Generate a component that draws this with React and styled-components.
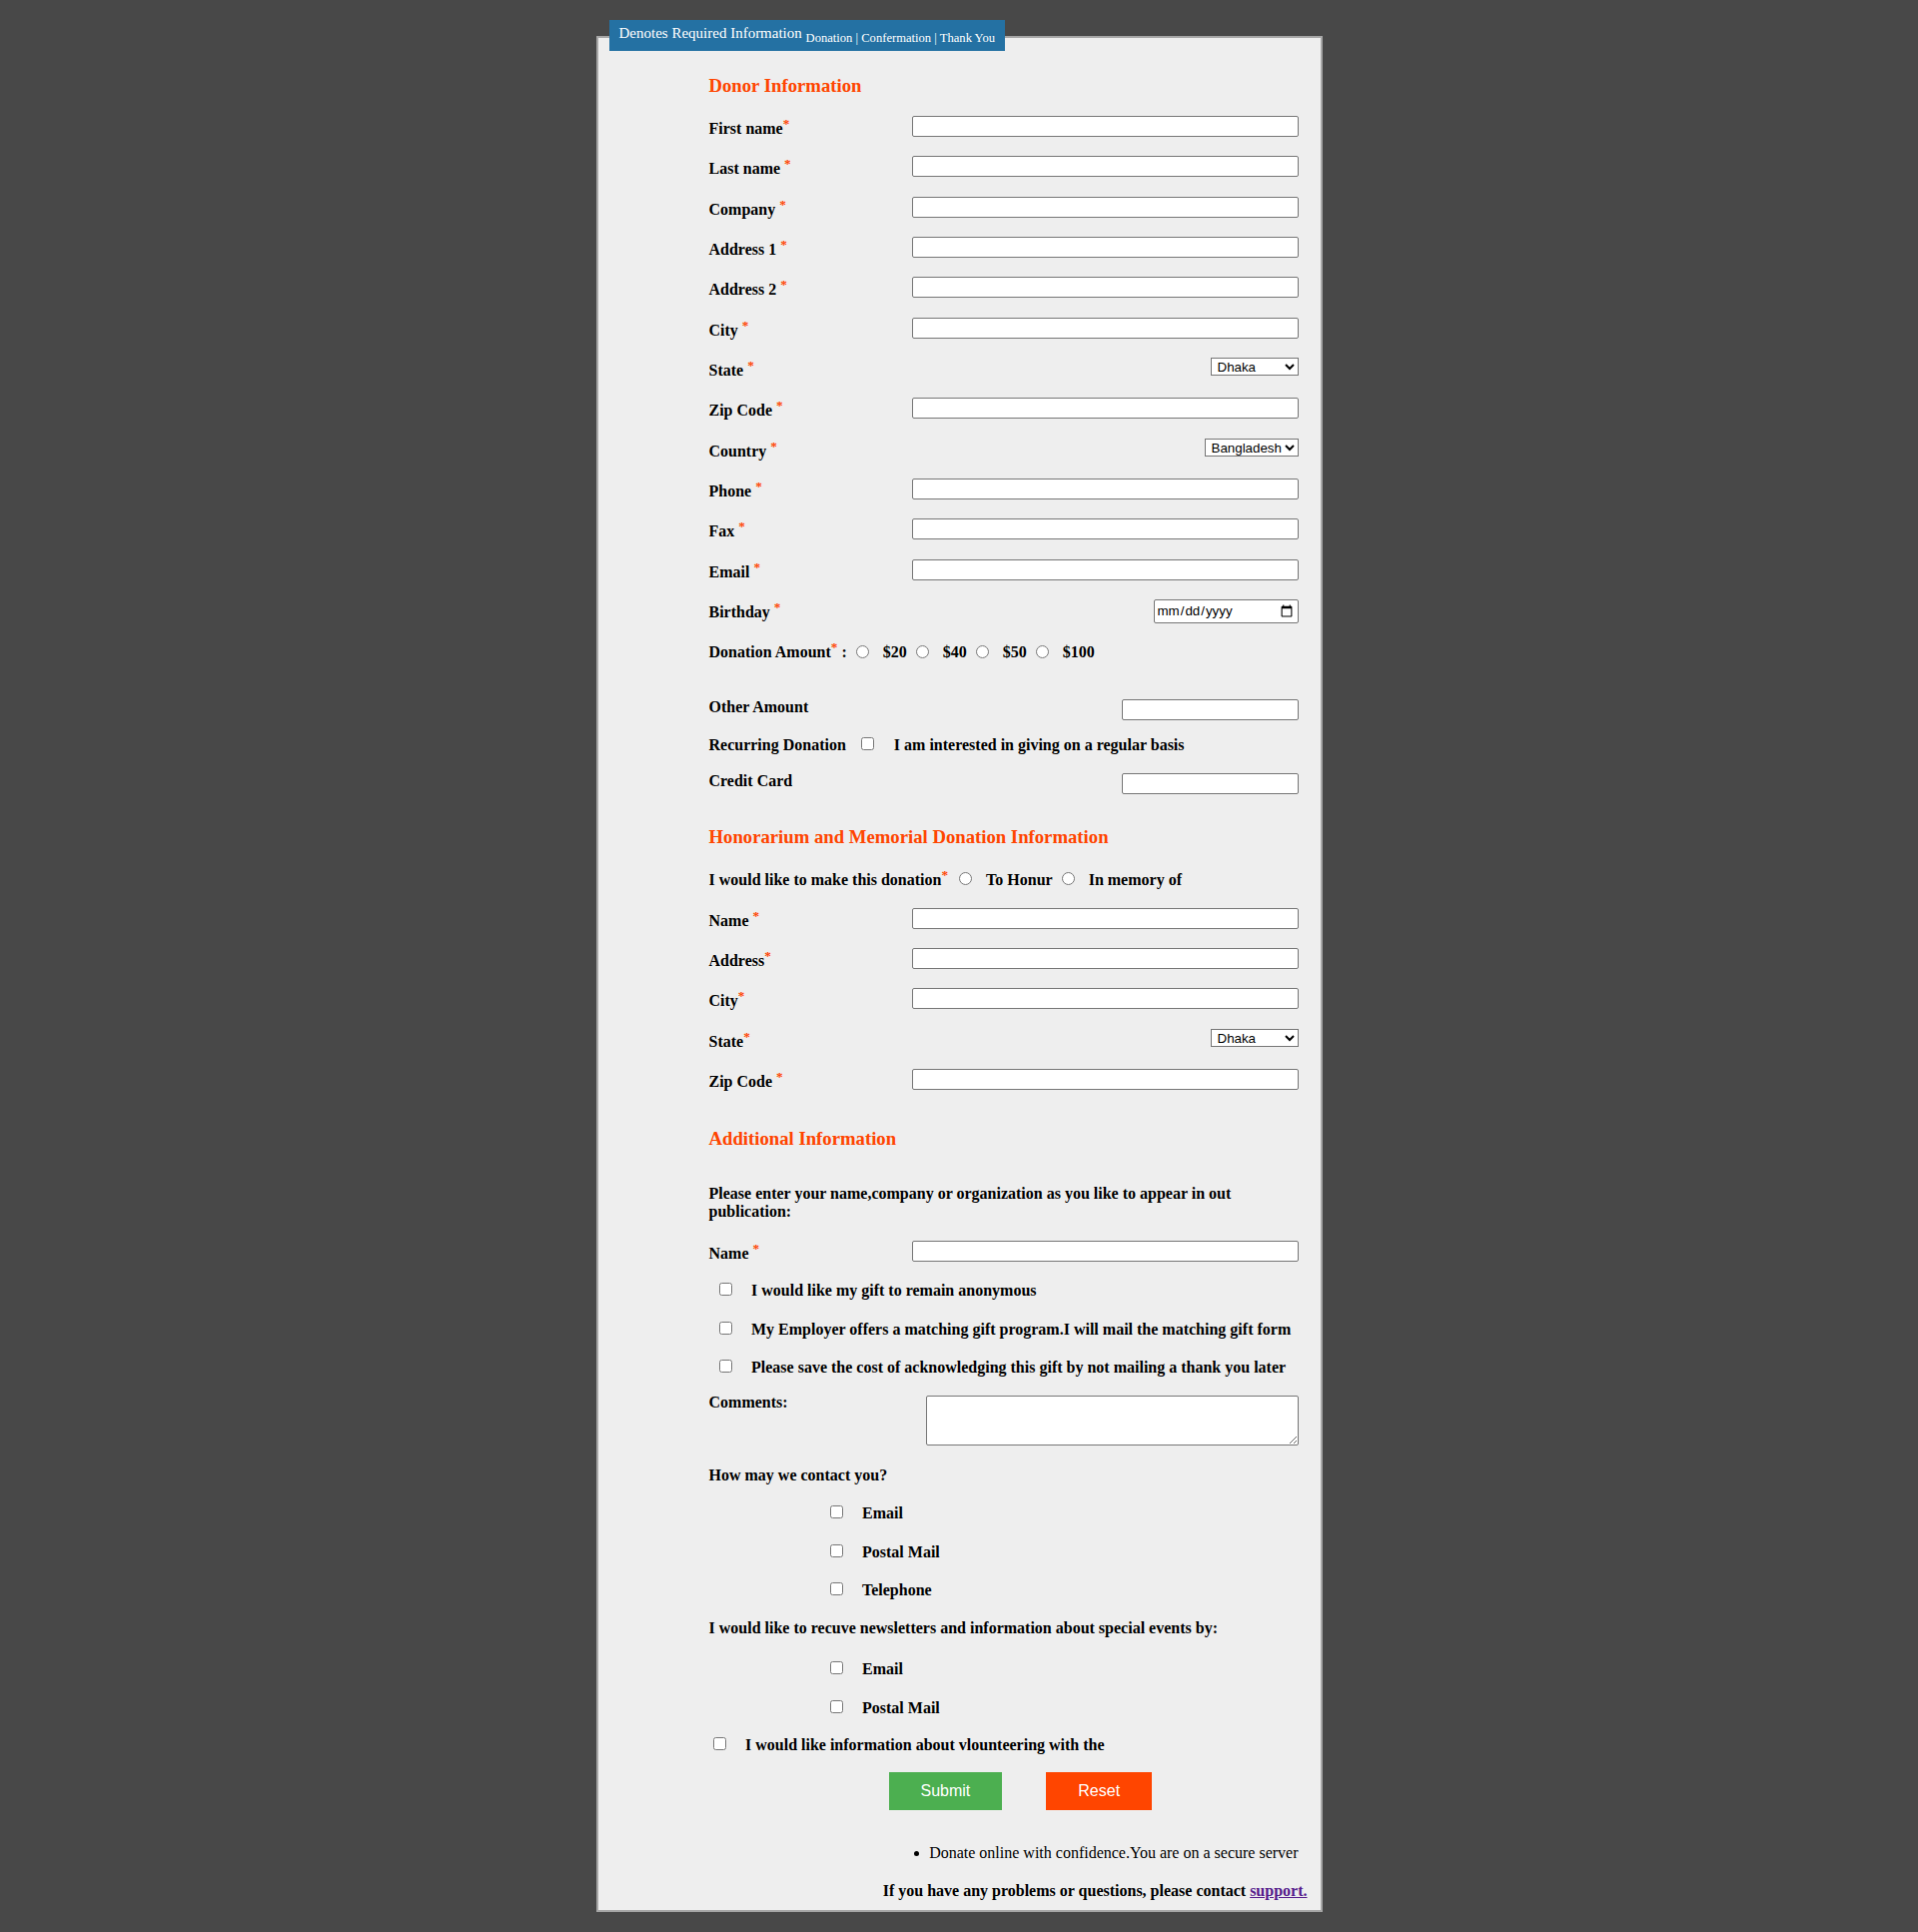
import React from 'react';
import styled, { createGlobalStyle } from 'styled-components';

const GlobalStyle = createGlobalStyle`
  html, body { margin: 0; padding: 0; background: #484848; }
  body {
    font-family: "Liberation Serif", "Times New Roman", serif;
    font-size: 16px;
    color: #000;
  }
`;

const Page = styled.div`
  min-height: 1934px;
  padding-top: 36px;
  box-sizing: border-box;
`;

const Panel = styled.form`
  position: relative;
  display: flex;
  flex-direction: column;
  width: 727px;
  margin: 0 auto;
  box-sizing: border-box;
  border: 2px solid #a6a6a6;
  background: #eeeeee;
  padding: 37px 22px 10px 111px;
`;

const Tab = styled.div`
  position: absolute;
  top: -18px;
  left: 11px;
  height: 31px;
  box-sizing: border-box;
  padding: 5px 10px 0;
  background: #2471a3;
  color: #fff;
  font-size: 15px;
  white-space: nowrap;
`;

const TabSteps = styled.span`
  font-size: 12.6px;
  vertical-align: -4px;
`;

const Heading = styled.h3`
  margin: 0;
  height: ${(p) => p.$h}px;
  font-size: 18.72px;
  font-weight: bold;
  color: #ff4500;
`;

const FieldRow = styled.div`
  display: flex;
  justify-content: space-between;
  align-items: flex-start;
  height: ${(p) => p.$h}px;
`;

const Label = styled.label`
  font-weight: bold;
  white-space: nowrap;
`;

const Req = styled.sup`
  color: #ff4500;
`;

const TextInput = styled.input`
  box-sizing: border-box;
  width: ${(p) => p.$w || 387}px;
  height: 21px;
  margin: ${(p) => p.$mt || 0}px 0 0;
  padding: 1px 2px;
  border: 1px solid #767676;
  border-radius: 2px;
  background: #fff;
  font: 13.33px "Liberation Sans", Arial, sans-serif;
`;

const DateInput = styled.input`
  box-sizing: border-box;
  width: 145px;
  height: 24px;
  margin: 0;
  padding: 1px 2px;
  border: 1px solid #767676;
  border-radius: 2px;
  background: #fff;
  font: 13.33px "Liberation Sans", Arial, sans-serif;
`;

const Select = styled.select`
  box-sizing: border-box;
  width: ${(p) => p.$w}px;
  height: 18px;
  margin: 0;
  font: 13.33px "Liberation Sans", Arial, sans-serif;
  color: #000;
  background: #fff;
  border: 1px solid #767676;
  padding: 0 0 0 2px;
`;

const TextArea = styled.textarea`
  box-sizing: border-box;
  width: 373px;
  height: 50px;
  margin: 2px 0 0;
  border: 1px solid #767676;
  border-radius: 2px;
  background: #fff;
`;

const InlineRow = styled.div`
  height: ${(p) => p.$h}px;
  font-weight: bold;
  white-space: nowrap;
  padding-left: ${(p) => p.$indent || 0}px;
`;

const Radio = styled.input.attrs({ type: 'radio' })`
  width: 13px;
  height: 13px;
  margin: 0 14px 0 ${(p) => p.$ml || 9}px;
  vertical-align: baseline;
`;

const Check = styled.input.attrs({ type: 'checkbox' })`
  width: 13px;
  height: 13px;
  margin: 0 ${(p) => p.$mr || 19.5}px 0 ${(p) => p.$ml || 0}px;
  vertical-align: baseline;
`;

const Paragraph = styled.p`
  margin: 0;
  height: ${(p) => p.$h}px;
  font-weight: bold;
`;

const ButtonRow = styled.div`
  display: flex;
  gap: 44px;
  height: ${(p) => p.$h}px;
  padding-left: 180px;
`;

const Button = styled.button`
  height: 38px;
  padding: 0 32px;
  border: none;
  color: #fff;
  background: ${(p) => p.$bg};
  font: 16px "Liberation Sans", Arial, sans-serif;
  cursor: pointer;
`;

const SecureNote = styled.div`
  text-align: right;
  height: ${(p) => p.$h}px;
  white-space: nowrap;
`;

const Dot = styled.span`
  display: inline-block;
  width: 5px;
  height: 5px;
  border-radius: 50%;
  background: #000;
  margin-right: 10px;
  vertical-align: 2px;
`;

const Footer = styled.div`
  text-align: right;
  font-weight: bold;
  margin-right: -9px;
  white-space: nowrap;
`;

const Link = styled.a`
  color: #551a8b;
  text-decoration: underline;
`;

const P = 40.33;

const stateOptions = ['Dhaka', 'Chittagong', 'Rajshahi', 'Khulna', 'Sylhet'];
const countryOptions = ['Bangladesh', 'India', 'Nepal'];

const donorFields = [
  { label: 'First name', sp: false },
  { label: 'Last name', sp: true },
  { label: 'Company', sp: true },
  { label: 'Address 1', sp: true },
  { label: 'Address 2', sp: true },
  { label: 'City', sp: true },
  { label: 'State', sp: true, kind: 'select', opts: stateOptions, w: 88 },
  { label: 'Zip Code', sp: true },
  { label: 'Country', sp: true, kind: 'select', opts: countryOptions, w: 94 },
  { label: 'Phone', sp: true },
  { label: 'Fax', sp: true },
  { label: 'Email', sp: true },
  { label: 'Birthday', sp: true, kind: 'date' },
];

const honorFields = [
  { label: 'Name', sp: true },
  { label: 'Address', sp: false },
  { label: 'City', sp: false },
  { label: 'State', sp: false, kind: 'select', opts: stateOptions, w: 88 },
  { label: 'Zip Code', sp: true },
];

function Control({ f }) {
  if (f.kind === 'select') {
    return (
      <Select $w={f.w} defaultValue={f.opts[0]}>
        {f.opts.map((o) => (
          <option key={o}>{o}</option>
        ))}
      </Select>
    );
  }
  if (f.kind === 'date') return <DateInput type="date" />;
  return <TextInput type="text" />;
}

function Field({ f, h }) {
  return (
    <FieldRow $h={h}>
      <Label>
        {f.label}
        {f.sp ? ' ' : ''}
        <Req>*</Req>
      </Label>
      <Control f={f} />
    </FieldRow>
  );
}

export default function App() {
  return (
    <Page>
      <GlobalStyle />
      <Panel onSubmit={(e) => e.preventDefault()}>
        <Tab>
          Denotes Required Information{' '}
          <TabSteps>Donation | Confermation | Thank You</TabSteps>
        </Tab>

        <Heading $h={41}>Donor Information</Heading>
        {donorFields.map((f) => (
          <Field key={f.label} f={f} h={P} />
        ))}
        <InlineRow $h={58.5}>
          Donation Amount<Req>*</Req> :
          <Radio name="amt" />$20
          <Radio name="amt" />$40
          <Radio name="amt" />$50
          <Radio name="amt" />$100
        </InlineRow>
        <FieldRow $h={37.8}>
          <Label>Other Amount</Label>
          <TextInput type="text" $w={177} $mt={1} />
        </FieldRow>
        <InlineRow $h={36.3}>
          Recurring Donation
          <Check $ml={15} $mr={20} />I am interested in giving on a regular basis
        </InlineRow>
        <FieldRow $h={54.3}>
          <Label>Credit Card</Label>
          <TextInput type="text" $w={177} $mt={1} />
        </FieldRow>

        <Heading $h={40.6}>Honorarium and Memorial Donation Information</Heading>
        <InlineRow $h={40.8}>
          I would like to make this donation<Req>*</Req>
          <Radio name="kind" $ml={11} />To Honur
          <Radio name="kind" />In memory of
        </InlineRow>
        {honorFields.map((f, i) => (
          <Field key={f.label} f={f} h={i === honorFields.length - 1 ? 59 : P} />
        ))}

        <Heading $h={57.5}>Additional Information</Heading>
        <Paragraph $h={55.5}>
          Please enter your name,company or organization as you like to appear in out publication:
        </Paragraph>
        <Field f={{ label: 'Name', sp: true }} h={41.5} />
        <InlineRow $h={38.3} $indent={10}>
          <Check />I would like my gift to remain anonymous
        </InlineRow>
        <InlineRow $h={38.3} $indent={10}>
          <Check />My Employer offers a matching gift program.I will mail the matching gift form
        </InlineRow>
        <InlineRow $h={35.3} $indent={10}>
          <Check />Please save the cost of acknowledging this gift by not mailing a thank you later
        </InlineRow>
        <FieldRow $h={72.7}>
          <Label>Comments:</Label>
          <TextArea />
        </FieldRow>
        <InlineRow $h={38.3}>How may we contact you?</InlineRow>
        <InlineRow $h={38.3} $indent={121}>
          <Check />Email
        </InlineRow>
        <InlineRow $h={38.4} $indent={121}>
          <Check />Postal Mail
        </InlineRow>
        <InlineRow $h={38.3} $indent={121}>
          <Check />Telephone
        </InlineRow>
        <InlineRow $h={41}>
          I would like to recuve newsletters and information about special events by:
        </InlineRow>
        <InlineRow $h={38.3} $indent={121}>
          <Check />Email
        </InlineRow>
        <InlineRow $h={37.4} $indent={121}>
          <Check />Postal Mail
        </InlineRow>
        <InlineRow $h={35.6} $indent={4}>
          <Check />I would like information about vlounteering with the
        </InlineRow>
        <ButtonRow $h={72.6}>
          <Button type="submit" $bg="#4caf50">Submit</Button>
          <Button type="reset" $bg="#ff4500">Reset</Button>
        </ButtonRow>
        <SecureNote $h={37.9}>
          <Dot />
          Donate online with confidence.You are on a secure server
        </SecureNote>
        <Footer>
          If you have any problems or questions, please contact <Link href="#support">support.</Link>
        </Footer>
      </Panel>
    </Page>
  );
}
